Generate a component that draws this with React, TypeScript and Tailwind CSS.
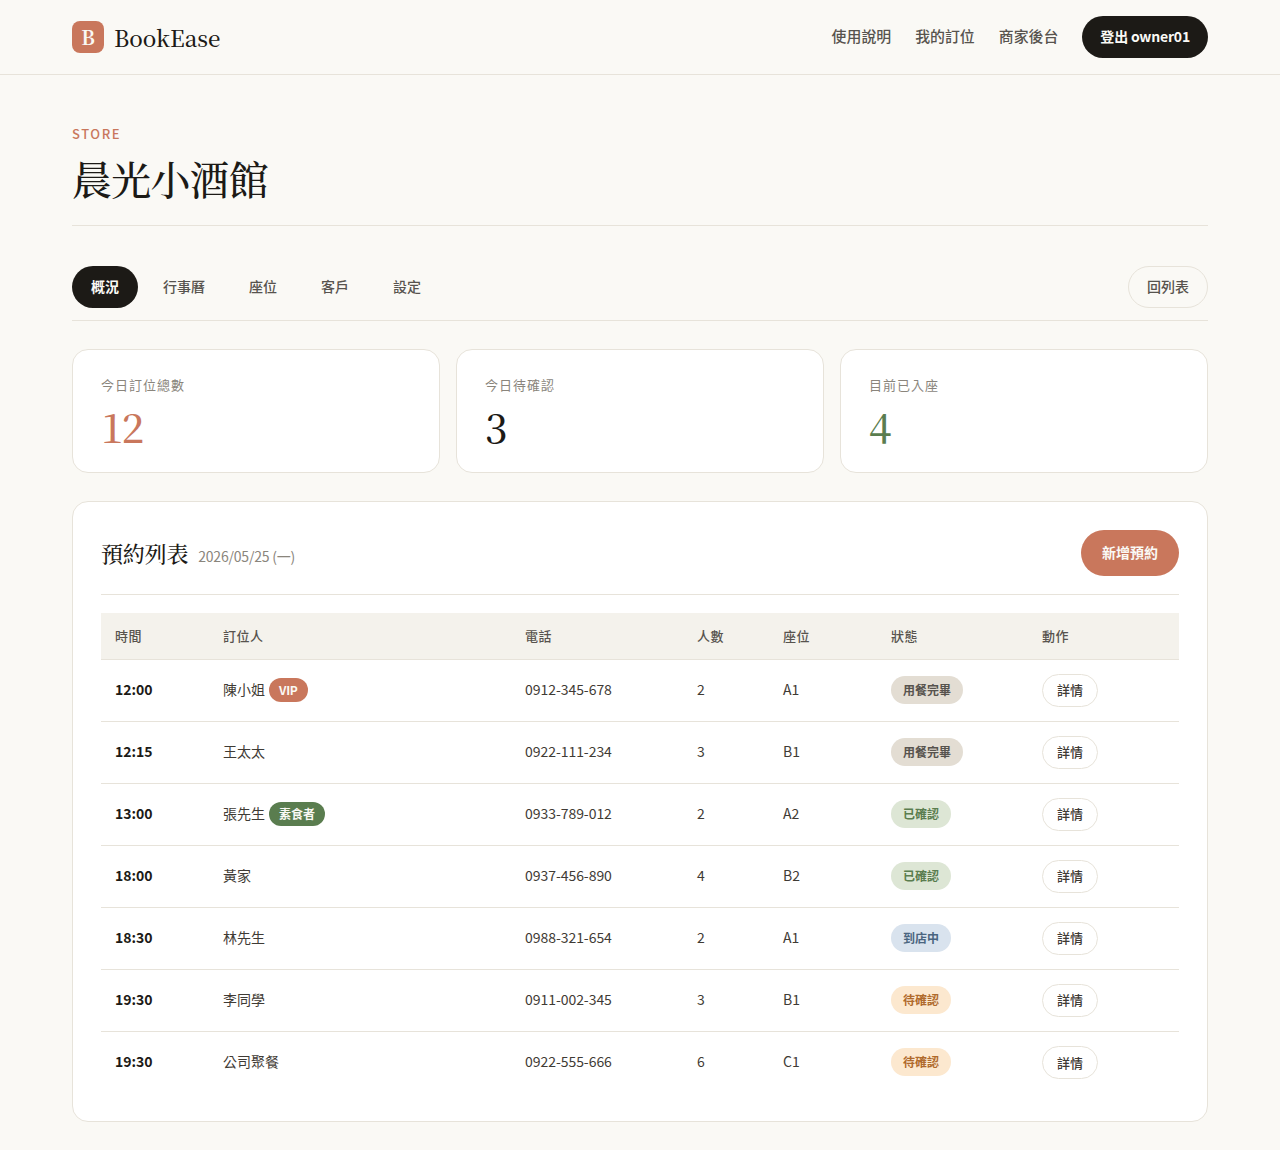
const sans = "font-['Noto_Sans_CJK_TC','Noto_Sans',sans-serif]";
const serif = "font-['Noto_Serif_CJK_TC','Noto_Serif_TC','Noto_Serif','Liberation_Serif','Noto_Sans_CJK_TC',serif]";

const rows = [
  { t: "12:00", n: "陳小姐", tag: "VIP", tc: "bg-[#c9775c] tracking-[-0.3px]", p: "0912-345-678", c: "2", s: "A1", st: "用餐完畢", sc: "bg-[#e3ddd3] text-[#57534e]" },
  { t: "12:15", n: "王太太", p: "0922-111-234", c: "3", s: "B1", st: "用餐完畢", sc: "bg-[#e3ddd3] text-[#57534e]" },
  { t: "13:00", n: "張先生", tag: "素食者", tc: "bg-[#5a7d4f]", p: "0933-789-012", c: "2", s: "A2", st: "已確認", sc: "bg-[#dde6d5] text-[#5a7d4f]" },
  { t: "18:00", n: "黃家", p: "0937-456-890", c: "4", s: "B2", st: "已確認", sc: "bg-[#dde6d5] text-[#5a7d4f]" },
  { t: "18:30", n: "林先生", p: "0988-321-654", c: "2", s: "A1", st: "到店中", sc: "bg-[#d9e3ee] text-[#4a6580]" },
  { t: "19:30", n: "李同學", p: "0911-002-345", c: "3", s: "B1", st: "待確認", sc: "bg-[#fce8cf] text-[#b06a2c]" },
  { t: "19:30", n: "公司聚餐", p: "0922-555-666", c: "6", s: "C1", st: "待確認", sc: "bg-[#fce8cf] text-[#b06a2c]" },
];

const heads = [
  ["時間", "w-[108px]"],
  ["訂位人", "w-[302px]"],
  ["電話", "w-[172px]"],
  ["人數", "w-[86px]"],
  ["座位", "w-[108px]"],
  ["狀態", "w-[151px]"],
  ["動作", "w-[151px]"],
];

function Stat({ label, value, color }: { label: string; value: string; color: string }) {
  return (
    <div className="h-[124px] rounded-2xl border border-[#e7e3da] bg-white px-7 pt-[26px]">
      <div className="text-[13px] leading-[18px] tracking-[1px] text-[#8a857c]">{label}</div>
      <div className={`${serif} ${color} mt-[6px] text-[40px] font-medium leading-[52px] tracking-[-1.6px]`}>{value}</div>
    </div>
  );
}

export default function App() {
  return (
    <div className={`${sans} min-h-[1150px] bg-[#faf9f5] text-[#1c1a16]`}>
      <header className="border-b border-[#e7e3da]">
        <div className="mx-auto flex h-[74px] w-[1136px] items-center justify-between">
          <div className="flex items-center gap-[10px]">
            <div className={`${serif} flex h-8 w-8 items-center justify-center rounded-lg bg-[#c9775c] text-[19.2px] font-bold text-[#faf9f5]`}>B</div>
            <div className={`${serif} text-[22.4px] font-medium leading-8`}>BookEase</div>
          </div>
          <nav className="flex items-center gap-6 text-[14.9px] font-medium text-[#57534e]">
            <span className="pb-[2px]">使用說明</span>
            <span className="pb-[2px]">我的訂位</span>
            <span className="pb-[2px]">商家後台</span>
            <span className="flex h-[42px] items-center rounded-full bg-[#1c1a16] px-[18px] pb-[2px] text-[14px] font-bold tracking-[-0.2px] text-[#faf9f5]">登出 owner01</span>
          </nav>
        </div>
      </header>
      <main className="mx-auto w-[1136px] pt-[50px]">
        <div className="border-b border-[#e7e3da] pb-[19px]">
          <div className="text-[13px] font-medium leading-[18px] tracking-[1.56px] text-[#c9775c]">STORE</div>
          <h1 className={`${serif} mt-[7px] text-[40px] font-medium leading-[56px] tracking-[-0.8px]`}>晨光小酒館</h1>
        </div>
        <div className="mt-10 flex items-center justify-between border-b border-[#e7e3da] pb-3">
          <div className="flex items-center gap-[6px] text-[14px] font-medium text-[#57534e]">
            <span className="flex h-[42px] items-center rounded-full bg-[#1c1a16] px-[19px] pb-[2px] font-bold text-[#faf9f5]">概況</span>
            <span className="px-[19px] pb-[2px]">行事曆</span>
            <span className="px-[19px] pb-[2px]">座位</span>
            <span className="px-[19px] pb-[2px]">客戶</span>
            <span className="px-[19px] pb-[2px]">設定</span>
          </div>
          <span className="flex h-[42px] items-center rounded-full border border-[#e7e3da] px-[18px] pb-[2px] text-[14px] font-medium text-[#57534e]">回列表</span>
        </div>
        <div className="mt-7 grid grid-cols-3 gap-4">
          <Stat label="今日訂位總數" value="12" color="text-[#c9775c]" />
          <Stat label="今日待確認" value="3" color="text-[#1c1a16]" />
          <Stat label="目前已入座" value="4" color="text-[#5a7d4f]" />
        </div>
        <section className="mb-7 mt-7 rounded-2xl border border-[#e7e3da] bg-white px-7 pb-7 pt-7">
          <div className="flex items-center justify-between border-b border-[#e7e3da] pb-[18px]">
            <div className="flex items-baseline gap-[10px]">
              <h2 className={`${serif} text-[22px] font-medium leading-8 tracking-[-0.2px]`}>預約列表</h2>
              <span className="text-[14px] tracking-[-0.2px] text-[#8a857c]">2026/05/25 (一)</span>
            </div>
            <span className="flex h-[46px] items-center rounded-full bg-[#c9775c] px-[21px] pb-[2px] text-[14px] font-bold text-[#faf9f5]">新增預約</span>
          </div>
          <table className="mt-[18px] w-full table-fixed border-collapse text-[14px] text-[#3f3b35]">
            <thead>
              <tr className="h-[46px] border-b border-[#e7e3da] bg-[#f4f2ec]">
                {heads.map(([h, w]) => (
                  <th key={h} className={`${w} px-[14px] text-left text-[13px] font-medium tracking-[0.5px] text-[#57534e]`}>{h}</th>
                ))}
              </tr>
            </thead>
            <tbody>
              {rows.map((r, i) => (
                <tr key={i} className={`h-[62px] ${i < rows.length - 1 ? "border-b border-[#e7e3da]" : ""}`}>
                  <td className="px-[14px] pb-[2px] font-bold text-[#1c1a16]">{r.t}</td>
                  <td className="px-[14px]">
                    <span className="inline-flex items-center gap-1">
                      <span className="pb-[2px]">{r.n}</span>
                      {r.tag && <span className={`${r.tc} inline-flex h-6 items-center rounded-full px-[10px] text-[12px] font-bold text-[#faf9f5]`}>{r.tag}</span>}
                    </span>
                  </td>
                  <td className="px-[14px] pb-[2px] tracking-[-0.05px]">{r.p}</td>
                  <td className="px-[14px] pb-[2px]">{r.c}</td>
                  <td className="px-[14px] pb-[2px]">{r.s}</td>
                  <td className="px-[14px]">
                    <span className={`${r.sc} inline-flex h-7 items-center rounded-full px-3 text-[12px] font-bold`}>{r.st}</span>
                  </td>
                  <td className="px-[14px]">
                    <span className="inline-flex h-[33px] items-center rounded-full border border-[#e7e3da] bg-white px-[14px] text-[13px] font-medium text-[#3f3b35]">詳情</span>
                  </td>
                </tr>
              ))}
            </tbody>
          </table>
        </section>
      </main>
    </div>
  );
}
